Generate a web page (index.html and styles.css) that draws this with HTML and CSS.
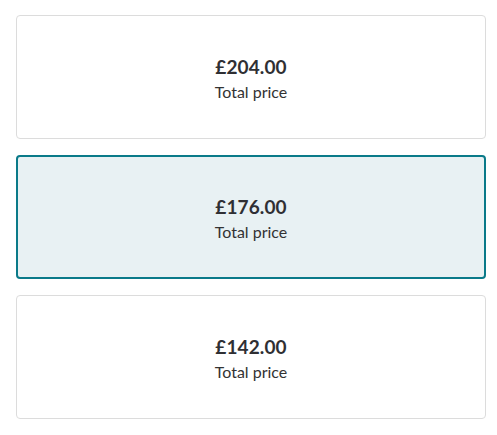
FILE: index.html
```html
<!DOCTYPE html>
<html lang="en">
<head>
<meta charset="utf-8">
<title>Price options</title>
<link rel="stylesheet" href="styles.css">
</head>
<body>
<div class="options">
  <div class="card">
    <div class="price">£204.00</div>
    <div class="label">Total price</div>
  </div>
  <div class="card selected">
    <div class="price">£176.00</div>
    <div class="label">Total price</div>
  </div>
  <div class="card">
    <div class="price">£142.00</div>
    <div class="label">Total price</div>
  </div>
</div>
</body>
</html>
```
FILE: styles.css
```css
html, body {
  margin: 0;
  padding: 0;
  background: #ffffff;
}
body {
  font-family: Lato, "Noto Sans", sans-serif;
  color: #333333;
}
.options {
  display: flex;
  flex-direction: column;
  gap: 16px;
  width: 470px;
  padding: 15px 0 0 16px;
}
.card {
  box-sizing: border-box;
  height: 124px;
  padding-top: 4px;
  border: 1px solid #dcdcdc;
  border-radius: 4px;
  background: #ffffff;
  display: flex;
  flex-direction: column;
  align-items: center;
  justify-content: center;
  gap: 4px;
}
.card.selected {
  border: 2px solid #0a7a89;
  background: #e8f1f3;
}
.price {
  font-size: 19px;
  font-weight: 700;
  line-height: 22px;
  letter-spacing: 0.1px;
  color: #2f2f33;
}
.label {
  font-size: 16px;
  line-height: 20px;
  color: #333333;
}
```
